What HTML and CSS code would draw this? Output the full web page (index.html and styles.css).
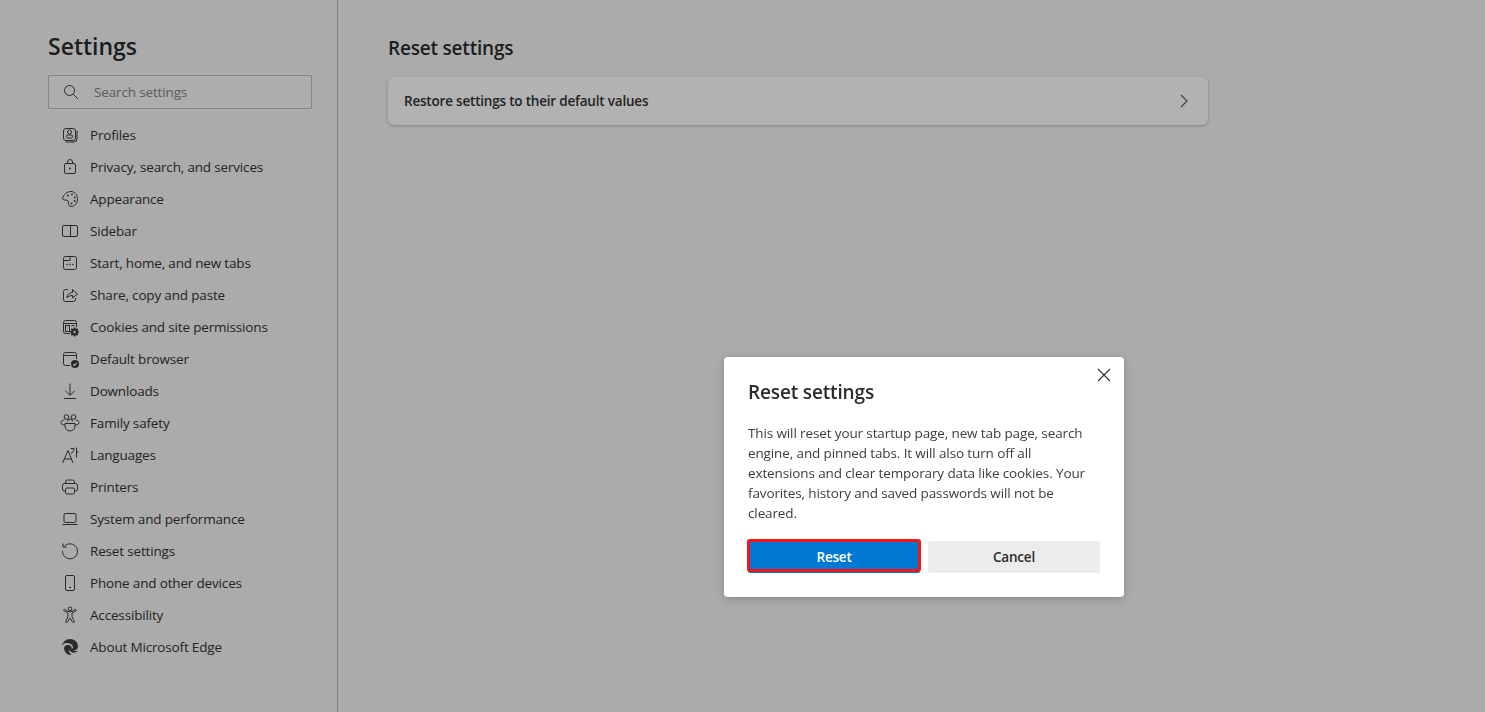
FILE: index.html
```html
<!DOCTYPE html>
<html lang="en">
<head>
    <meta charset="UTF-8">
    <meta name="viewport" content="width=device-width, initial-scale=1.0">
    <title>Settings</title>
    <link rel="stylesheet" href="styles.css">
</head>
<body>
    <div class="page">
        <!-- Left navigation -->
        <nav class="sidebar">
            <h1 class="sidebar-title">Settings</h1>
            <div class="search">
                <svg class="search-icon" viewBox="0 0 16 16"><circle cx="6.500" cy="6.500" r="5"/><path d="M10.200 10.200 15 15"/></svg>
                <span class="search-text">Search settings</span>
            </div>
            <ul class="nav-list">
                <li class="nav-item">
                    <svg class="icon" viewBox="0 0 20 20"><rect x="3.500" y="3.500" width="12" height="12" rx="2.500"/><path d="M17 5.500v8.500a3 3 0 0 1-3 3H5.500"/><circle cx="9.500" cy="7" r="2"/><rect x="6.500" y="10" width="6" height="3" rx="1.200"/></svg>
                    <span>Profiles</span>
                </li>
                <li class="nav-item">
                    <svg class="icon" viewBox="0 0 20 20"><rect x="4.500" y="6.500" width="11" height="10" rx="1.500"/><path d="M7.500 6.500V5a2.500 2.500 0 0 1 5 0v1.500"/><circle class="solid" cx="10" cy="11.500" r="1"/></svg>
                    <span>Privacy, search, and services</span>
                </li>
                <li class="nav-item">
                    <svg class="icon" viewBox="0 0 20 20"><path d="M2.500 9.500C3.500 5.500 7 2.500 11 2.500c3.800 0 6.500 3.300 6.500 7.300 0 4.400-3 7.700-6 7.700-2.500 0-3-1.500-3-3.300 0-2.200-1-3.200-2.500-3.200-1.200 0-3.300.2-3.500-1.500z"/><circle class="solid" cx="8" cy="6.500" r=".9"/><circle class="solid" cx="12" cy="5.500" r=".9"/><circle class="solid" cx="14.800" cy="8.500" r=".9"/><circle class="solid" cx="14.500" cy="12" r=".9"/><circle class="solid" cx="11.500" cy="14.500" r=".9"/></svg>
                    <span>Appearance</span>
                </li>
                <li class="nav-item">
                    <svg class="icon" viewBox="0 0 20 20"><rect x="2.500" y="4.500" width="15" height="11" rx="1.500"/><path d="M10.500 4.500v11"/></svg>
                    <span>Sidebar</span>
                </li>
                <li class="nav-item">
                    <svg class="icon" viewBox="0 0 20 20"><rect x="3.500" y="3.500" width="13" height="13" rx="2"/><path d="M3.500 7.500H10V3.500"/><circle class="solid" cx="7" cy="11.500" r=".8"/><circle class="solid" cx="10" cy="11.500" r=".8"/><circle class="solid" cx="13" cy="11.500" r=".8"/></svg>
                    <span>Start, home, and new tabs</span>
                </li>
                <li class="nav-item">
                    <svg class="icon" viewBox="0 0 20 20"><path d="M8 4.500H5.500a2 2 0 0 0-2 2v8a2 2 0 0 0 2 2h8a2 2 0 0 0 2-2v-1.500"/><path d="M7 13c0-3.200 2.200-5.500 5.500-5.500V4.500l5 4.500-5 4v-2.500c-2.500 0-4.500.7-5.500 2.500z"/></svg>
                    <span>Share, copy and paste</span>
                </li>
                <li class="nav-item">
                    <svg class="icon" viewBox="0 0 20 20"><path d="M10 16.500H5.500a2 2 0 0 1-2-2v-9a2 2 0 0 1 2-2h9a2 2 0 0 1 2 2V10"/><path d="M3.500 6.500h13"/><rect x="5.500" y="8.500" width="4" height="6"/><path d="M11.500 8.500h3"/><circle class="solid" cx="14.500" cy="15" r="3.500"/><path class="gear" d="M14.500 10.500v9M10 15h9M11.300 11.800l6.400 6.400M17.700 11.800l-6.400 6.400"/><circle class="hole" cx="14.500" cy="15" r="1.200"/></svg>
                    <span>Cookies and site permissions</span>
                </li>
                <li class="nav-item">
                    <svg class="icon" viewBox="0 0 20 20"><path d="M10 16.500H5.500a2 2 0 0 1-2-2v-9a2 2 0 0 1 2-2h9a2 2 0 0 1 2 2V10"/><path d="M3.500 6.500h13"/><circle class="solid" cx="15" cy="15" r="4"/><path class="check" d="M13.200 15.200l1.300 1.200 2.300-2.600"/></svg>
                    <span>Default browser</span>
                </li>
                <li class="nav-item">
                    <svg class="icon" viewBox="0 0 20 20"><path d="M10 2.500V14M5.500 9.800 10 14.300l4.500-4.500M4 17.500h12"/></svg>
                    <span>Downloads</span>
                </li>
                <li class="nav-item">
                    <svg class="icon" viewBox="0 0 20 20"><circle cx="6.500" cy="4" r="2.300"/><circle cx="13.500" cy="4" r="2.300"/><path d="M4.500 7C2.500 7 1 8.200 1 9.700 1 11 2.500 12 5 12M15.500 7c2 0 3.500 1.200 3.500 2.700 0 1.300-1.500 2.300-4 2.300"/><path d="M7.500 8.500a2.500 2.500 0 0 1 5 0"/><path d="M5 10.500h10v2.500a5 5 0 0 1-10 0z"/></svg>
                    <span>Family safety</span>
                </li>
                <li class="nav-item">
                    <svg class="icon" viewBox="0 0 20 20"><path d="M2.500 18 8 5.500 13 18M4.500 14h7"/><path d="M10.500 3.500h3.500c0 2.500-1 4-3 5M16.500 2.500v10M16.500 7h2"/></svg>
                    <span>Languages</span>
                </li>
                <li class="nav-item">
                    <svg class="icon" viewBox="0 0 20 20"><path d="M5.500 6.500V5a2 2 0 0 1 2-2h5a2 2 0 0 1 2 2v1.500"/><path d="M5.500 14H4.500a2 2 0 0 1-2-2V8.500a2 2 0 0 1 2-2h11a2 2 0 0 1 2 2V12a2 2 0 0 1-2 2h-1"/><rect x="5.500" y="11" width="9" height="6" rx="1.500"/></svg>
                    <span>Printers</span>
                </li>
                <li class="nav-item">
                    <svg class="icon" viewBox="0 0 20 20"><rect x="4" y="4.500" width="12" height="9" rx="1.500"/><path d="M2.500 15.500h15"/></svg>
                    <span>System and performance</span>
                </li>
                <li class="nav-item">
                    <svg class="icon" viewBox="0 0 20 20"><path d="M4.500 5.200A7.500 7.500 0 1 1 2.500 10"/><path d="M3 2.500v3.500h3.500"/></svg>
                    <span>Reset settings</span>
                </li>
                <li class="nav-item">
                    <svg class="icon" viewBox="0 0 20 20"><rect x="5.500" y="2.500" width="9" height="15" rx="1.500"/><path d="M9 14.500h2"/></svg>
                    <span>Phone and other devices</span>
                </li>
                <li class="nav-item">
                    <svg class="icon" viewBox="0 0 20 20"><circle cx="10" cy="3.800" r="1.800"/><path d="M3.500 5.500 8 8v3.500L5.500 17c.8 1 1.500.8 2 0l2.500-4 2.500 4c.5.8 1.200 1 2 0L12 11.500V8l4.500-2.500c-.2-1-.9-1.200-1.500-1L12 6.500H8L5 4.500c-.6-.2-1.300 0-1.500 1z"/></svg>
                    <span>Accessibility</span>
                </li>
                <li class="nav-item">
                    <svg class="icon" viewBox="0 0 20 20"><path class="solid" d="M10 2a8 8 0 0 0-8 8c0-2.500 2.500-4 5-4 3 0 5.500 1.500 6 4 .2 1-.5 1.500-1.500 1.500.5-2.500-2-4-4.500-3.500C4.500 8.500 3.500 11 4.500 13.500 6 17 9 18.500 12 18c-2-1-3.500-3-3-5.500.8 2.500 3.500 3.500 6 3 1.500-.3 2.500-1 3-2-1.500.8-3.500.8-4.500 0 2 0 4.500-1.500 4.500-4C18 5 14.500 2 10 2z"/></svg>
                    <span>About Microsoft Edge</span>
                </li>
            </ul>
        </nav>

        <!-- Main content -->
        <main class="content">
            <h2 class="content-title">Reset settings</h2>
            <div class="card">
                <span class="card-label">Restore settings to their default values</span>
                <svg class="chevron" viewBox="0 0 8 14"><path d="M1 1l6 6-6 6"/></svg>
            </div>
        </main>
    </div>

    <!-- Reset dialog -->
    <div class="overlay">
        <div class="dialog">
            <svg class="close" viewBox="0 0 14 14"><path d="M1 1l12 12M13 1 1 13"/></svg>
            <h3 class="dialog-title">Reset settings</h3>
            <p class="dialog-text">This will reset your startup page, new tab page, search engine, and pinned tabs. It will also turn off all extensions and clear temporary data like cookies. Your favorites, history and saved passwords will not be cleared.</p>
            <div class="dialog-buttons">
                <button class="btn btn-reset">Reset</button>
                <button class="btn btn-cancel">Cancel</button>
            </div>
        </div>
    </div>
</body>
</html>
```

FILE: styles.css
```css
* {
    box-sizing: border-box;
}

body {
    margin: 0;
    font-family: "Open Sans", "Noto Sans", sans-serif;
    font-size: 13.5px;
    color: #232323;
    background-color: #ababab;
}

.page {
    display: flex;
    height: 712px;
    overflow: hidden;
}

.sidebar {
    width: 338px;
    flex-shrink: 0;
    padding: 30px 25px 0 48px;
    border-right: 1px solid #7f7f7f;
}

.sidebar-title {
    margin: 0;
    height: 32px;
    font-size: 23px;
    font-weight: 600;
    line-height: 32px;
    color: #1d1d1d;
}

.search {
    display: flex;
    align-items: center;
    width: 264px;
    height: 34px;
    margin-top: 13px;
    padding-left: 14px;
    border: 1px solid #858585;
    border-radius: 2px;
    background-color: #adadad;
}

.search-icon {
    width: 16px;
    height: 16px;
    fill: none;
    stroke: #2b2b2b;
    stroke-width: 1;
}

.search-text {
    margin-left: 15px;
    color: #5c5c5c;
    letter-spacing: -0.15px;
}

.nav-list {
    list-style: none;
    margin: 10px 0 0;
    padding: 0 0 0 12px;
}

.nav-item {
    display: flex;
    align-items: center;
    height: 32px;
    letter-spacing: -0.17px;
}

.icon {
    width: 20px;
    height: 20px;
    margin-right: 10px;
    flex-shrink: 0;
    fill: none;
    stroke: #2a2a2a;
    stroke-width: 1;
}

.icon .solid {
    fill: #2a2a2a;
    stroke: none;
}

.icon .gear {
    stroke-width: 1.6;
}

.icon .hole {
    fill: #ababab;
    stroke: none;
}

.icon .check {
    stroke: #ababab;
    stroke-width: 1.2;
}

.content {
    flex: 1;
    padding: 33px 0 0 50px;
}

.content-title {
    margin: 0;
    height: 30px;
    font-size: 19px;
    font-weight: 600;
    line-height: 30px;
    letter-spacing: -0.2px;
    color: #1d1d1d;
}

.card {
    display: flex;
    align-items: center;
    justify-content: space-between;
    width: 820px;
    height: 48px;
    margin-top: 14px;
    padding: 0 20px 0 16px;
    border-radius: 6px;
    background-color: #b2b2b2;
    box-shadow: 0 1px 3px rgba(0, 0, 0, 0.25);
}

.card-label {
    font-weight: 600;
    letter-spacing: -0.2px;
}

.chevron {
    width: 8px;
    height: 14px;
    fill: none;
    stroke: #444;
    stroke-width: 1.2;
}

.overlay {
    position: fixed;
    top: 0;
    left: 0;
    width: 100%;
    height: 100%;
    padding: 357px 0 0 724px;
}

.dialog {
    position: relative;
    width: 400px;
    height: 240px;
    padding: 21px 24px 0;
    border-radius: 4px;
    background-color: #fff;
    box-shadow: 0 2px 8px rgba(0, 0, 0, 0.2);
}

.close {
    position: absolute;
    top: 11px;
    right: 13px;
    width: 14px;
    height: 14px;
    fill: none;
    stroke: #333;
    stroke-width: 1.1;
}

.dialog-title {
    margin: 0;
    height: 28px;
    font-size: 19px;
    font-weight: 600;
    line-height: 28px;
    letter-spacing: -0.15px;
    color: #2b2b2b;
}

.dialog-text {
    width: 340px;
    margin: 17px 0 0;
    line-height: 20px;
    letter-spacing: -0.12px;
    color: #3c3c3c;
}

.dialog-buttons {
    display: flex;
    gap: 8px;
    margin-top: 18px;
}

.btn {
    position: relative;
    width: 172px;
    height: 32px;
    border: none;
    border-radius: 2px;
    font-family: inherit;
    font-size: 13.5px;
    font-weight: 600;
    letter-spacing: -0.2px;
}

.btn-reset {
    color: #fff;
    background-color: #0078d4;
}

/* red highlight drawn over the button */
.btn-reset::after {
    content: "";
    position: absolute;
    top: -2px;
    left: -1px;
    right: -1px;
    bottom: 1px;
    border: 3px solid #f01818;
    border-radius: 3px;
}

.btn-cancel {
    color: #2b2b2b;
    background-color: #ececec;
}
```
